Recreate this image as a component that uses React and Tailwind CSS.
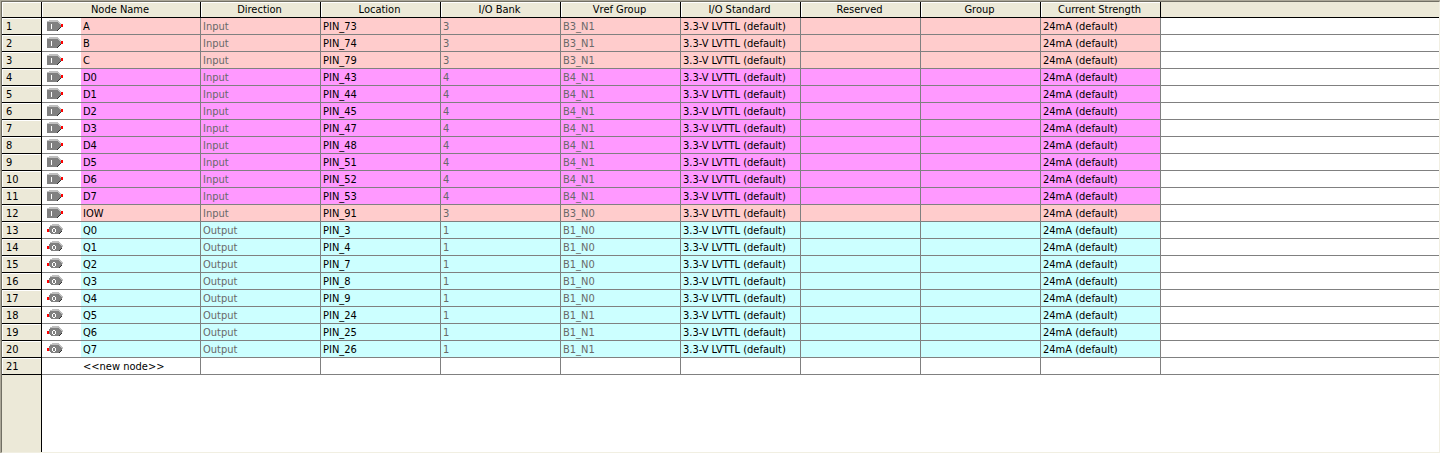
const COLUMNS = [
  { key: "direction", label: "Direction" },
  { key: "location", label: "Location" },
  { key: "bank", label: "I/O Bank" },
  { key: "vref", label: "Vref Group" },
  { key: "standard", label: "I/O Standard" },
  { key: "reserved", label: "Reserved" },
  { key: "group", label: "Group" },
  { key: "strength", label: "Current Strength" },
];

const READ_ONLY = new Set(["direction", "bank", "vref"]);

const BANK_FILL = {
  1: "bg-[#ccffff]",
  3: "bg-[#ffcccc]",
  4: "bg-[#ff99ff]",
};

const PINS = [
  ["A", "Input", 73, 3, "B3_N1"],
  ["B", "Input", 74, 3, "B3_N1"],
  ["C", "Input", 79, 3, "B3_N1"],
  ["D0", "Input", 43, 4, "B4_N1"],
  ["D1", "Input", 44, 4, "B4_N1"],
  ["D2", "Input", 45, 4, "B4_N1"],
  ["D3", "Input", 47, 4, "B4_N1"],
  ["D4", "Input", 48, 4, "B4_N1"],
  ["D5", "Input", 51, 4, "B4_N1"],
  ["D6", "Input", 52, 4, "B4_N1"],
  ["D7", "Input", 53, 4, "B4_N1"],
  ["IOW", "Input", 91, 3, "B3_N0"],
  ["Q0", "Output", 3, 1, "B1_N0"],
  ["Q1", "Output", 4, 1, "B1_N0"],
  ["Q2", "Output", 7, 1, "B1_N0"],
  ["Q3", "Output", 8, 1, "B1_N0"],
  ["Q4", "Output", 9, 1, "B1_N0"],
  ["Q5", "Output", 24, 1, "B1_N1"],
  ["Q6", "Output", 25, 1, "B1_N1"],
  ["Q7", "Output", 26, 1, "B1_N1"],
].map(([name, direction, pin, bank, vref]) => ({
  name,
  direction,
  location: `PIN_${pin}`,
  bank,
  vref,
  standard: "3.3-V LVTTL (default)",
  strength: "24mA (default)",
}));

function InputPinIcon() {
  return (
    <svg width="16" height="12" viewBox="0 0 16 12" shapeRendering="crispEdges" aria-hidden="true">
      <path fill="#c0c0c0" d="M2 0h9v1h1v1h1v1h1v2h-1V4h-1V3h-1V2H0V1h2z" />
      <path fill="#808080" d="M0 2h11v1h1v1h1v1h1v2h-1v1h-1v1h-1v1h-1v1H0z" />
      <path fill="#303030" d="M10 10h1V9h1V8h1V7h1v1h-1v1h-1v1h-1v1h-1z" />
      <path fill="#ffffff" d="M4 4h1v5H4z" />
      <path fill="#ff0000" d="M14 4h2v3h-2z" />
    </svg>
  );
}

function OutputPinIcon() {
  return (
    <svg width="16" height="12" viewBox="0 0 16 12" shapeRendering="crispEdges" aria-hidden="true">
      <path fill="#c0c0c0" d="M5 0h7v1h1v1h1v1h1v1h1v2h-1V5h-1V4h-1V3h-1V2H3V1h2z" />
      <path fill="#808080" d="M3 2h9v1h1v1h1v1h1v2h-1v1h-1v1h-1v1H4V9H3V8H2V3h1z" />
      <path fill="#303030" d="M12 9h1V8h1V7h1v1h-1v1h-1v1h-1z" />
      <path fill="#ffffff" d="M6 4h2v1h1v3H8v1H6V8H5V5h1zM6 5v3h2V5z" fillRule="evenodd" />
      <path fill="#ff0000" d="M0 5h2v3H0z" />
    </svg>
  );
}

const headCell =
  "h-4 border-b border-r border-black bg-[#ece9d8] py-0 pl-0 pr-0.5 text-center font-normal shadow-[inset_1px_1px_0_#ffffff]";
const rowHead =
  "h-[17px] border-b border-r border-black bg-[#ece9d8] pb-0 pl-1 pr-0 pt-px text-left font-normal shadow-[inset_1px_1px_0_#ffffff]";
const bodyCell = "border-b border-r border-[#808080] pb-0 pl-0.5 pr-0 pt-0.5 text-left font-normal";

function PinRow({ index, pin }) {
  const fill = BANK_FILL[pin.bank];
  return (
    <tr>
      <th scope="row" className={rowHead}>{index}</th>
      <td className="border-b border-[#808080] py-0 pl-[5px] pr-0">
        {pin.direction === "Input" ? <InputPinIcon /> : <OutputPinIcon />}
      </td>
      <td className={`${bodyCell} ${fill}`}>{pin.name}</td>
      {COLUMNS.map(({ key }) => (
        <td key={key} className={`${bodyCell} ${fill} ${READ_ONLY.has(key) ? "text-[#696969]" : ""}`}>
          {pin[key]}
        </td>
      ))}
      <td className="border-b border-[#808080] p-0" />
    </tr>
  );
}

export default function App() {
  return (
    <main className="flex h-screen flex-col border-b border-r border-white bg-white font-['DejaVu_Sans_Condensed','Noto_Sans',sans-serif] text-[11px] leading-[14px] text-black">
      <div className="flex min-h-0 flex-1 flex-col border border-b-0 border-r-0 border-[#aca899]">
        <div className="flex min-h-0 flex-1 flex-col overflow-hidden border border-b-[#f1efe2] border-l-[#716f64] border-r-[#f1efe2] border-t-[#716f64]">
          <table className="w-full shrink-0 table-fixed border-separate border-spacing-0 whitespace-nowrap">
            <colgroup>
              <col className="w-10" />
              <col className="w-[39px]" />
              <col className="w-[120px]" />
              {COLUMNS.map(({ key }) => (
                <col key={key} className="w-[120px]" />
              ))}
              <col />
            </colgroup>
            <thead>
              <tr>
                <th className={headCell} aria-label="Row" />
                <th scope="col" colSpan={2} className={headCell}>Node Name</th>
                {COLUMNS.map(({ key, label }) => (
                  <th key={key} scope="col" className={headCell}>{label}</th>
                ))}
                <th className="border-b border-black bg-[#ece9d8] p-0" aria-label="Unused" />
              </tr>
            </thead>
            <tbody>
              {PINS.map((pin, i) => (
                <PinRow key={pin.name} index={i + 1} pin={pin} />
              ))}
              <tr>
                <th scope="row" className={rowHead}>{PINS.length + 1}</th>
                <td className="border-b border-[#808080] p-0" />
                <td className={bodyCell}>&lt;&lt;new node&gt;&gt;</td>
                {COLUMNS.map(({ key }) => (
                  <td key={key} className={bodyCell} />
                ))}
                <td className="border-b border-[#808080] p-0" />
              </tr>
            </tbody>
          </table>
          <div className="w-10 flex-1 border-r border-black bg-[#ece9d8]" />
        </div>
      </div>
    </main>
  );
}
